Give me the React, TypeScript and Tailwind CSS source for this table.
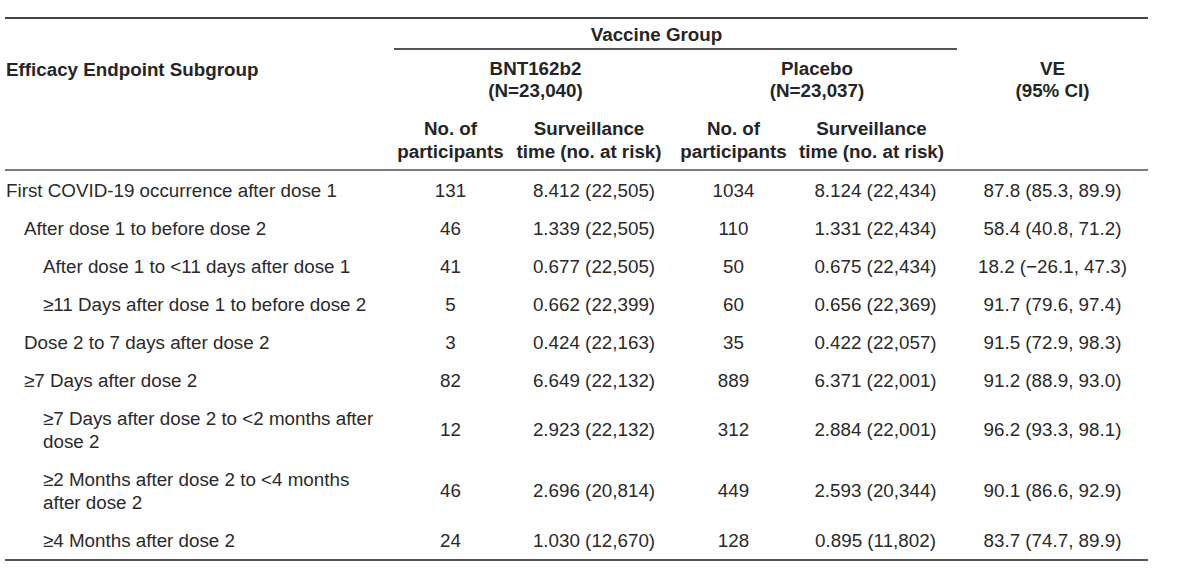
import React from "react";

type Row = {
  label: React.ReactNode;
  level: number;
  tall?: boolean;
  v: [string, string, string, string, string];
};

const rows: Row[] = [
  { label: "First COVID-19 occurrence after dose 1", level: 0, v: ["131", "8.412 (22,505)", "1034", "8.124 (22,434)", "87.8 (85.3, 89.9)"] },
  { label: "After dose 1 to before dose 2", level: 1, v: ["46", "1.339 (22,505)", "110", "1.331 (22,434)", "58.4 (40.8, 71.2)"] },
  { label: "After dose 1 to <11 days after dose 1", level: 2, v: ["41", "0.677 (22,505)", "50", "0.675 (22,434)", "18.2 (\u221226.1, 47.3)"] },
  { label: "\u226511 Days after dose 1 to before dose 2", level: 2, v: ["5", "0.662 (22,399)", "60", "0.656 (22,369)", "91.7 (79.6, 97.4)"] },
  { label: "Dose 2 to 7 days after dose 2", level: 1, v: ["3", "0.424 (22,163)", "35", "0.422 (22,057)", "91.5 (72.9, 98.3)"] },
  { label: "\u22657 Days after dose 2", level: 1, v: ["82", "6.649 (22,132)", "889", "6.371 (22,001)", "91.2 (88.9, 93.0)"] },
  {
    label: (
      <>
        {"\u22657 Days after dose 2 to <2 months after"}
        <br />
        {"dose 2"}
      </>
    ),
    level: 2,
    tall: true,
    v: ["12", "2.923 (22,132)", "312", "2.884 (22,001)", "96.2 (93.3, 98.1)"],
  },
  {
    label: (
      <>
        {"\u22652 Months after dose 2 to <4 months"}
        <br />
        {"after dose 2"}
      </>
    ),
    level: 2,
    tall: true,
    v: ["46", "2.696 (20,814)", "449", "2.593 (20,344)", "90.1 (86.6, 92.9)"],
  },
  { label: "\u22654 Months after dose 2", level: 2, v: ["24", "1.030 (12,670)", "128", "0.895 (11,802)", "83.7 (74.7, 89.9)"] },
];

const indent = ["pl-[1px]", "pl-[19px]", "pl-[38px]"];

export default function App() {
  return (
    <div
      className="w-[1186px] h-[578px] bg-white text-[#2a2a2a] text-[18.8px] leading-[23px] overflow-hidden"
      style={{ fontFamily: '"Liberation Sans", Arial, sans-serif' }}
    >
      <div className="ml-[5px] mt-[17px] w-[1143px] border-t-2 border-[#444444]">
        {/* Header */}
        <div className="flex border-b-2 border-[#7a7a7a] font-bold text-[#252525]">
          <div className="w-[389px] pl-[1px] pt-[38.5px]">Efficacy Endpoint Subgroup</div>
          <div className="w-[563px] flex flex-col">
            <div className="h-[31px] pt-[3.5px] pr-[38px] text-center border-b-2 border-[#555555]">Vaccine Group</div>
            <div className="flex">
              <div className="w-[283px] flex flex-col">
                <div className="pt-[8px] text-center leading-[22px]">
                  BNT162b2
                  <br />
                  (N=23,040)
                </div>
                <div className="flex pt-[14.5px] pb-[6.5px] text-center">
                  <div className="w-[113px]">
                    No. of
                    <br />
                    participants
                  </div>
                  <div className="w-[170px] pr-[6px]">
                    Surveillance
                    <br />
                    time (no. at risk)
                  </div>
                </div>
              </div>
              <div className="w-[280px] flex flex-col">
                <div className="pt-[8px] text-center leading-[22px]">
                  Placebo
                  <br />
                  (N=23,037)
                </div>
                <div className="flex pt-[14.5px] pb-[6.5px] text-center">
                  <div className="w-[113px]">
                    No. of
                    <br />
                    participants
                  </div>
                  <div className="w-[167px] pr-[4px]">
                    Surveillance
                    <br />
                    time (no. at risk)
                  </div>
                </div>
              </div>
            </div>
          </div>
          <div className="w-[191px] pt-[39px] text-center leading-[22px]">
            VE
            <br />
            (95% CI)
          </div>
        </div>

        {/* Body */}
        <div className="border-b-2 border-[#555555]">
          {rows.map((r, i) => (
            <div key={i} className="flex items-center py-[7.5px]">
              <div className={`w-[389px] ${indent[r.level]}`}>{r.label}</div>
              <div className="w-[113px] text-center">{r.v[0]}</div>
              <div className="w-[170px] text-center pl-[4px]">{r.v[1]}</div>
              <div className="w-[113px] text-center">{r.v[2]}</div>
              <div className="w-[167px] text-center pl-[4px]">{r.v[3]}</div>
              <div className="w-[191px] text-center">{r.v[4]}</div>
            </div>
          ))}
        </div>
      </div>
    </div>
  );
}
